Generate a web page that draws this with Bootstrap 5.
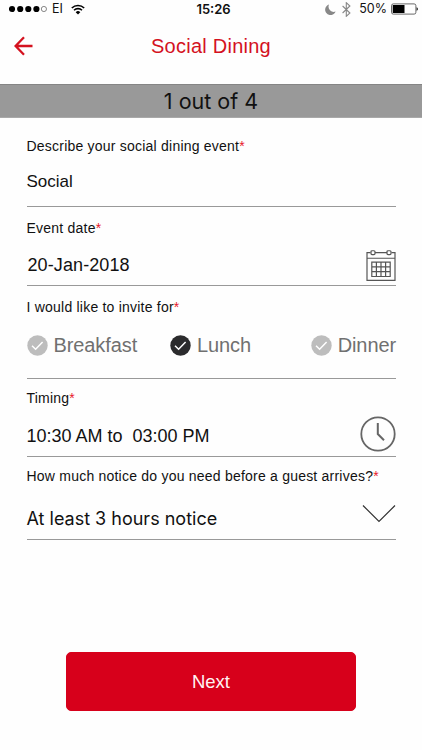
<!DOCTYPE html>
<html lang="en">
<head>
<meta charset="utf-8">
<meta name="viewport" content="width=device-width, initial-scale=1">
<title>Social Dining</title>
<link href="https://cdn.jsdelivr.net/npm/bootstrap@5.3.0/dist/css/bootstrap.min.css" rel="stylesheet">
<style>
  body { font-family: "Liberation Sans", Arial, sans-serif; color: #111; background: #fefefe; }
  .screen { height: 750px; overflow: hidden; }
  .ios { font-family: Inter, "Liberation Sans", sans-serif; }
  .status { height: 18px; padding: 0 4px 0 9px; font-size: 12.5px; line-height: 18px; }
  .status .side { flex: 1 1 0; }
  .carrier { margin-left: 5px; }
  .bluetooth { margin-left: 6px; }
  .clock { font-weight: 600; font-size: 13px; color: #111; }
  .topbar { height: 66px; padding: 0 12px 10px; }
  .topbar h1 { font-size: 20px; letter-spacing: .25px; color: #d4121f; line-height: 24px; font-weight: 400; }
  .topbar .slot { width: 24px; }
  .step { height: 34px; background: #999; border-top: 1px solid #858585; border-bottom: 1px solid #a9a9a9; font-size: 21.5px; line-height: 33px; }
  .field { margin: 0 26px 0 26.5px; border-bottom: 1px solid #999; }
  .caption { display: block; font-size: 14px; line-height: 20px; letter-spacing: .22px; }
  .caption span { color: #e8192c; }
  .value { font-size: 18px; line-height: 24px; white-space: pre; }
  .f-event { height: 89px; padding-top: 18px; }
  .f-event .value { font-size: 17px; margin-top: 14px; }
  .f-date { height: 79px; padding-top: 11px; }
  .f-date .value { padding: 15px 0 0 1px; letter-spacing: .1px; }
  .f-date svg { margin-top: 11px; }
  .f-meal { height: 93px; padding-top: 11px; }
  .f-time { height: 78px; padding-top: 9px; }
  .f-notice { height: 83px; padding-top: 9px; }
  .f-notice .value { padding-top: 21px; }
  .f-notice svg { margin-top: 17px; }
  .meal { font-size: 20px; line-height: 24px; color: #707070; gap: 6px; letter-spacing: -.1px; }
  .meal.first { width: 143.5px; }
  .next { width: 290px; height: 59px; margin-top: 112px; --bs-btn-bg: #d7001b; --bs-btn-border-color: #d7001b; --bs-btn-border-radius: 5px; --bs-btn-color: #fff3f3; --bs-btn-font-size: 18.5px; }
  svg { display: block; flex: none; }
</style>
<script src="https://cdn.jsdelivr.net/npm/bootstrap@5.3.0/dist/js/bootstrap.bundle.min.js"></script>
</head>
<body>
<svg class="d-none">
  <symbol id="tick" viewBox="0 0 21 21"><circle cx="10.5" cy="10.5" r="10.2" fill="currentColor"/><path d="M5 10.8l3.6 3.5 7-7.4" fill="none" stroke="#fff" stroke-width="1.5"/></symbol>
</svg>
<div class="screen d-flex flex-column">
  <div class="status ios d-flex align-items-center">
    <div class="side d-flex align-items-center">
      <svg width="38" height="8" viewBox="0 0 38 8"><g fill="#000"><circle cx="3" cy="4" r="3.1"/><circle cx="11.2" cy="4" r="3.1"/><circle cx="19.3" cy="4" r="3.1"/><circle cx="27.4" cy="4" r="3.1"/></g><circle cx="34.9" cy="4" r="2.6" fill="none" stroke="#555" stroke-width=".7"/></svg>
      <span class="carrier">EI</span>
      <svg class="ms-2" width="14" height="11" viewBox="0 0 14 11"><g fill="none" stroke="#000" stroke-width="1.6"><path d="M.8 4a8.8 8.8 0 0 1 12.4 0"/><path d="M3 6.3a5.7 5.7 0 0 1 8 0"/></g><path d="M7 10.6L4.7 8.2a3.3 3.3 0 0 1 4.6 0z"/></svg>
    </div>
    <div class="clock">15:26</div>
    <div class="side d-flex align-items-center justify-content-end">
      <svg width="11" height="11" viewBox="0 0 11 11"><path d="M4 .5A5.4 5.4 0 1 0 10.6 7.6 5.3 5.3 0 0 1 4 .5z" fill="#888"/></svg>
      <svg class="bluetooth" width="9" height="15" viewBox="0 0 9 15"><path d="M.6 4l7.3 7-3.6 3.3V.7L7.9 4l-7.3 7" fill="none" stroke="#888" stroke-width="1.1"/></svg>
      <span class="ps-1 ms-1 me-1 text-end">50%</span>
      <svg width="27" height="12" viewBox="0 0 27 12"><rect x=".5" y=".9" width="24.4" height="10.2" rx="1.8" fill="none" stroke="#444" stroke-width=".8"/><path d="M1.7 2h11.8v8H1.7z"/><path d="M25.6 4.2c1.6.5 1.6 3.1 0 3.6z"/></svg>
    </div>
  </div>
  <header class="topbar d-flex align-items-center justify-content-between">
    <svg width="24" height="20" viewBox="0 0 24 20"><path d="M20.5 10H3.8M12 1.3L3.6 10l8.4 8.7" fill="none" stroke="#d4121f" stroke-width="2.3"/></svg>
    <h1 class="m-0">Social Dining</h1>
    <span class="slot"></span>
  </header>
  <div class="step ios text-center">1 out of 4</div>
  <form class="d-flex flex-column">
    <div class="field f-event">
      <span class="caption">Describe your social dining event<span>*</span></span>
      <div class="value">Social</div>
    </div>
    <div class="field f-date">
      <span class="caption">Event date<span>*</span></span>
      <div class="d-flex justify-content-between">
        <div class="value">20-Jan-2018</div>
        <svg width="30" height="34" viewBox="0 0 30 35.4" preserveAspectRatio="none"><g fill="none" stroke="#555" stroke-width="1.2"><path d="M4.5 3.7H1v29h28v-29h-3.5M9 3.7h12M1 9.6h28"/><rect x="5" y="1.8" width="4" height="4" rx="1"/><rect x="21" y="1.8" width="4" height="4" rx="1"/><path d="M5.8 13.6h18.4v15H5.8zM10.4 13.6v15M15 13.6v15M19.6 13.6v15M5.8 18.6h18.4M5.8 23.6h18.4"/></g></svg>
      </div>
    </div>
    <div class="field f-meal">
      <span class="caption">I would like to invite for<span>*</span></span>
      <div class="d-flex mt-3">
        <div class="meal first d-flex align-items-center"><svg width="21" height="21" color="#bdbdbd"><use href="#tick"/></svg>Breakfast</div>
        <div class="meal d-flex align-items-center"><svg width="21" height="21" color="#2b2b2d"><use href="#tick"/></svg>Lunch</div>
        <div class="meal d-flex align-items-center ms-auto"><svg width="21" height="21" color="#bdbdbd"><use href="#tick"/></svg>Dinner</div>
      </div>
    </div>
    <div class="field f-time">
      <span class="caption">Timing<span>*</span></span>
      <div class="d-flex justify-content-between">
        <div class="value pt-3">10:30 AM to  03:00 PM</div>
        <svg class="mt-2" width="36" height="36" viewBox="0 0 36 36"><g fill="none" stroke="#666"><circle cx="18" cy="18" r="16.7" stroke-width="1.8"/><path d="M17.8 7v11l6.2 6.3" stroke-width="2"/></g></svg>
      </div>
    </div>
    <div class="field f-notice">
      <span class="caption">How much notice do you need before a guest arrives?<span>*</span></span>
      <div class="d-flex justify-content-between">
        <div class="value ios">At least 3 hours notice</div>
        <svg width="34" height="20" viewBox="0 0 34 20"><path d="M1 2.5l16 16 16-16" fill="none" stroke="#333" stroke-width="1.2"/></svg>
      </div>
    </div>
    <button type="button" class="btn btn-danger next align-self-center">Next</button>
  </form>
</div>
</body>
</html>
